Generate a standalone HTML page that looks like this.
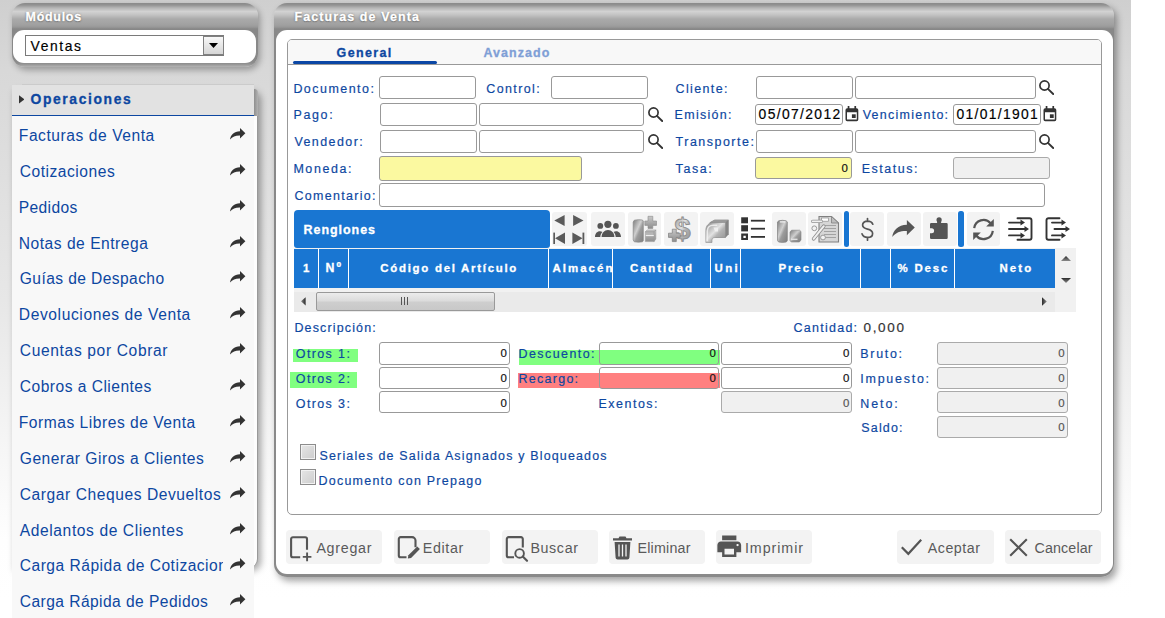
<!DOCTYPE html>
<html lang="es"><head><meta charset="utf-8"><title>Facturas de Venta</title>
<style>
html,body{margin:0;padding:0}
body{width:1165px;height:618px;overflow:hidden;background:#fff;position:relative;font-family:"Liberation Sans",sans-serif;color:#0d47a1}
.a,.in,.tb,.bb,.t,svg{position:absolute}
.t{white-space:nowrap;line-height:1}
#bg{left:0;top:0;width:1131px;height:618px;background:linear-gradient(to bottom,#cfcfcf 0,#d8d8d8 70px,#e7e7e7 300px,#f6f6f6 450px,#fefefe 540px,#fff 600px)}
.pan{border-radius:13px;background:linear-gradient(to bottom,#8a8a8a 0,#929292 2px,#b6b6b6 5px,#d2d2d2 8.5px,#c2c2c2 12px,#aaa 16px,#a0a0a0 22px,#989898 24px,#868686 26px,#888 27px,#8a8a8a 100%)}
.pan>.w{position:absolute;background:#fff;border-radius:11px}
.in{box-sizing:border-box;border:1px solid #999;border-radius:3px;background:#fff}
.y{background:#fbf9a0}
.g{background:#f0f0f0;border-color:#aaa}
.tb{top:212px;width:33.600px;height:34px;background:#f3f3f3;border-radius:3px}
.bb{top:530px;width:96px;height:34px;background:#f3f3f3;border-radius:4px}
.bar{top:211px;width:5px;height:35.5px;border-radius:2.5px;background:#1976d2}
.cb{box-sizing:border-box;width:16px;height:16px;border:1px solid #8c8c8c;box-shadow:inset 0 0 0 1px #f2f2f2;background:linear-gradient(135deg,#e6e6e6,#cdcdcd)}
</style></head><body>
<div id="bg" class="a"></div>

<!-- Modulos panel -->
<div class="a pan" style="left:12px;top:3px;width:246px;height:63.500px;box-shadow:2px 3px 6px rgba(0,0,0,.3);background:linear-gradient(to bottom,#8a8a8a 0,#929292 2px,#b6b6b6 5px,#d2d2d2 8.500px,#c2c2c2 12px,#aaa 16px,#a0a0a0 22px,#989898 24px,#868686 26px,#888 27px,#8a8a8a 59px,#929292 61px,#aeaeae 63.500px)">
  <div class="w" style="left:1px;top:27px;right:2px;bottom:3.500px"></div>
</div>
<div class="a" style="left:25px;top:35px;width:197px;height:19px;border:1px solid #7a7a7a;background:#fff"></div>
<div class="a" style="left:203px;top:36px;width:19px;height:17px;border:1px solid #808080;background:linear-gradient(#f8f8f8,#d6d6d6)"></div>
<svg style="left:209px;top:43px" width="9" height="5" viewBox="0 0 9 5"><path d="M0 0h9L4.5 5z" fill="#000"/></svg>

<!-- Operaciones panel -->
<div class="a" style="left:12px;top:88px;width:244.700px;height:480px;background:#fdfdfd;border-right:1px solid #999;border-radius:0 9px 9px 0;box-shadow:3px 3px 7px rgba(0,0,0,.34)"></div>
<div class="a" style="left:12px;top:116px;width:242px;height:502px;background:#f8f8f8"></div>
<div class="a" style="left:254px;top:89px;width:3.700px;height:27px;background:linear-gradient(to right,#8e8e8e,#b2b2b2);border-radius:0 7px 0 0"></div>
<div class="a" style="left:22px;top:84px;width:232px;height:1px;background:#cbcbcb"></div>
<div class="a" style="left:12px;top:85px;width:242px;height:30px;background:#e2e2e2;border-bottom:1px solid #0d47a1;box-sizing:content-box;height:29.5px"></div>
<svg style="left:18.700px;top:95px" width="5.500" height="8.600" viewBox="0 0 6 9"><path d="M0 0L6 4.500L0 9z" fill="#333"/></svg>
<svg width="0" height="0" style="left:0;top:0"><defs><path id="sh" d="M10 0L15.400 5.200L10 10.400V7.500C5.600 7.400 2.600 8.400 0 11.600C.6 6.700 4 3.500 10 3.200z"/></defs></svg>
<svg style="left:230.300px;top:128.40px" width="15.400" height="11.600" viewBox="0 0 15.400 11.600"><use href="#sh" fill="#333"/></svg>
<svg style="left:230.300px;top:164.40px" width="15.400" height="11.600" viewBox="0 0 15.400 11.600"><use href="#sh" fill="#333"/></svg>
<svg style="left:230.300px;top:200.40px" width="15.400" height="11.600" viewBox="0 0 15.400 11.600"><use href="#sh" fill="#333"/></svg>
<svg style="left:230.300px;top:236.40px" width="15.400" height="11.600" viewBox="0 0 15.400 11.600"><use href="#sh" fill="#333"/></svg>
<svg style="left:230.300px;top:271.40px" width="15.400" height="11.600" viewBox="0 0 15.400 11.600"><use href="#sh" fill="#333"/></svg>
<svg style="left:230.300px;top:307.40px" width="15.400" height="11.600" viewBox="0 0 15.400 11.600"><use href="#sh" fill="#333"/></svg>
<svg style="left:230.300px;top:343.40px" width="15.400" height="11.600" viewBox="0 0 15.400 11.600"><use href="#sh" fill="#333"/></svg>
<svg style="left:230.300px;top:379.40px" width="15.400" height="11.600" viewBox="0 0 15.400 11.600"><use href="#sh" fill="#333"/></svg>
<svg style="left:230.300px;top:415.40px" width="15.400" height="11.600" viewBox="0 0 15.400 11.600"><use href="#sh" fill="#333"/></svg>
<svg style="left:230.300px;top:451.40px" width="15.400" height="11.600" viewBox="0 0 15.400 11.600"><use href="#sh" fill="#333"/></svg>
<svg style="left:230.300px;top:487.40px" width="15.400" height="11.600" viewBox="0 0 15.400 11.600"><use href="#sh" fill="#333"/></svg>
<svg style="left:230.300px;top:523.40px" width="15.400" height="11.600" viewBox="0 0 15.400 11.600"><use href="#sh" fill="#333"/></svg>
<svg style="left:230.300px;top:558.40px" width="15.400" height="11.600" viewBox="0 0 15.400 11.600"><use href="#sh" fill="#333"/></svg>
<svg style="left:230.300px;top:594.40px" width="15.400" height="11.600" viewBox="0 0 15.400 11.600"><use href="#sh" fill="#333"/></svg>


<!-- Main panel -->
<div class="a pan" style="left:274px;top:3px;width:840px;height:573.500px;box-shadow:3px 4px 7px rgba(0,0,0,.36)">
  <div class="w" style="left:2px;top:27px;right:1.200px;bottom:2.500px"></div>
</div>
<div class="a" style="left:287px;top:39px;width:813px;height:474px;border:1px solid #999;border-radius:5px;background:#fff;overflow:hidden">
  <div class="a" style="left:0;top:0;width:100%;height:24px;background:#f8f8f8;border-bottom:1px solid #999"></div>
</div>
<div class="a" style="left:293px;top:61px;width:144px;height:3.2px;border-radius:2px;background:#0b47a5"></div>

<!-- form inputs -->
<div class="in" style="left:379px;top:76px;width:97px;height:23px"></div>
<div class="in" style="left:551px;top:76px;width:97px;height:23px"></div>
<div class="in" style="left:756px;top:76px;width:97px;height:23px"></div>
<div class="in" style="left:855px;top:76px;width:181px;height:23px"></div>
<div class="in" style="left:380px;top:103px;width:97px;height:23px"></div>
<div class="in" style="left:479px;top:103px;width:165px;height:23px"></div>
<div class="in" style="left:755px;top:104px;width:88px;height:21px"></div>
<div class="in" style="left:953px;top:104px;width:88px;height:21px"></div>
<div class="in" style="left:380px;top:130px;width:97px;height:23px"></div>
<div class="in" style="left:479px;top:130px;width:165px;height:23px"></div>
<div class="in" style="left:756px;top:130px;width:97px;height:23px"></div>
<div class="in" style="left:855px;top:130px;width:181px;height:23px"></div>
<div class="in y" style="left:379px;top:156px;width:203px;height:25px"></div>
<div class="in y" style="left:755px;top:157px;width:97px;height:22px"></div>
<div class="in g" style="left:953px;top:157px;width:97px;height:22px"></div>
<div class="in" style="left:379px;top:183px;width:666px;height:24px"></div>
<svg width="0" height="0" style="left:0;top:0"><defs>
 <g id="mag"><circle cx="5.500" cy="5.500" r="4.600" fill="none" stroke="#333" stroke-width="1.700"/><path d="M8.900 8.900L14.200 14" stroke="#333" stroke-width="1.900" stroke-linecap="round"/></g>
 <g id="cal"><path d="M2.200 2.200h9.400a1.700 1.700 0 0 1 1.700 1.700v9.600a1.700 1.700 0 0 1-1.700 1.700H2.200A1.700 1.700 0 0 1 .5 13.500V3.900A1.700 1.700 0 0 1 2.200 2.200zM2 6.200v7.400h9.800V6.200z" fill="#333" fill-rule="evenodd"/><rect x="2.700" y="0" width="1.700" height="3" fill="#333"/><rect x="9.400" y="0" width="1.700" height="3" fill="#333"/><rect x="6.900" y="8.300" width="3.800" height="3.700" fill="#333"/></g>
</defs></svg>
<svg style="left:648.200px;top:106.600px" width="15" height="15"><use href="#mag"/></svg>
<svg style="left:648.200px;top:133.600px" width="15" height="15"><use href="#mag"/></svg>
<svg style="left:1039.400px;top:79.700px" width="15" height="15"><use href="#mag"/></svg>
<svg style="left:1039.400px;top:133.700px" width="15" height="15"><use href="#mag"/></svg>
<svg style="left:844.700px;top:106.200px" width="14" height="16"><use href="#cal"/></svg>
<svg style="left:1043px;top:106.200px" width="14" height="16"><use href="#cal"/></svg>

<!-- grid -->
<div class="a" style="left:294px;top:210px;width:256px;height:38px;background:#1976d2;border-radius:4px 4px 3px 3px"></div>
<div class="a" style="left:294px;top:248px;width:782px;height:63.5px;background:#f1f1f1"></div>
<div class="a" style="left:294px;top:291.500px;width:761px;height:20px;background:#eaeaea"></div>
<div class="a" style="left:294px;top:248.8px;width:761.3px;height:39.2px;background:#1976d2"></div>
<div class="a" style="left:318px;top:248.800px;width:1px;height:39.200px;background:#fff"></div>
<div class="a" style="left:348px;top:248.800px;width:1px;height:39.200px;background:#fff"></div>
<div class="a" style="left:548.3px;top:248.800px;width:1px;height:39.200px;background:#fff"></div>
<div class="a" style="left:612px;top:248.800px;width:1px;height:39.200px;background:#fff"></div>
<div class="a" style="left:710px;top:248.800px;width:1px;height:39.200px;background:#fff"></div>
<div class="a" style="left:740.2px;top:248.800px;width:1px;height:39.200px;background:#fff"></div>
<div class="a" style="left:860px;top:248.800px;width:1px;height:39.200px;background:#fff"></div>
<div class="a" style="left:890.2px;top:248.800px;width:1px;height:39.200px;background:#fff"></div>
<div class="a" style="left:954px;top:248.800px;width:1px;height:39.200px;background:#fff"></div>

<svg width="0" height="0" style="left:0;top:0"><defs><linearGradient id="ga" x1="0" y1="0" x2="0" y2="1"><stop offset="0" stop-color="#2a2a2a"/><stop offset="1" stop-color="#8a8a8a"/></linearGradient><linearGradient id="gb" x1="0" y1="0" x2="1" y2="0"><stop offset="0" stop-color="#2a2a2a"/><stop offset="1" stop-color="#8a8a8a"/></linearGradient><linearGradient id="gc" x1="1" y1="0" x2="0" y2="0"><stop offset="0" stop-color="#2a2a2a"/><stop offset="1" stop-color="#8a8a8a"/></linearGradient></defs></svg>
<svg style="left:1060.500px;top:256px" width="10" height="5"><path d="M0 5L5 0L10 5z" fill="url(#ga)"/></svg>
<svg style="left:1060.500px;top:278px" width="10" height="5"><path d="M0 0h10L5 5z" fill="url(#ga)"/></svg>
<svg style="left:301px;top:297px" width="4.600" height="8.600" viewBox="0 0 5 9"><path d="M5 0v9L0 4.500z" fill="url(#gc)"/></svg>
<svg style="left:1042px;top:297px" width="4.800" height="9" viewBox="0 0 5 9"><path d="M0 0v9L5 4.500z" fill="url(#gb)"/></svg>
<div class="a" style="left:316px;top:292px;width:177px;height:17px;border:1px solid #999;border-radius:2px;background:linear-gradient(#ececec,#dcdcdc 45%,#cecece 55%,#c8c8c8)"></div>
<div class="a" style="left:401px;top:297px;width:1px;height:8px;background:#555;box-shadow:3px 0 0 #555,6px 0 0 #555"></div>

<!-- toolbar -->
<div class="tb" style="left:551.5px;width:35.5px"></div>
<div class="tb" style="left:591.2px"></div>
<div class="tb" style="left:627.5px"></div>
<div class="tb" style="left:664px"></div>
<div class="tb" style="left:700.3px"></div>
<div class="tb" style="left:772px"></div>
<div class="tb" style="left:808.3px"></div>
<div class="a bar" style="left:844px"></div>
<div class="tb" style="left:850.3px"></div>
<div class="tb" style="left:887px"></div>
<div class="tb" style="left:923px"></div>
<div class="a bar" style="left:958.200px;width:5.600px"></div>
<div class="tb" style="left:966.8px"></div>
<svg width="0" height="0" style="left:0;top:0"><defs>
 <linearGradient id="gm" x1="0" y1="0" x2="1" y2="1"><stop offset="0" stop-color="#8a8a8a"/><stop offset=".45" stop-color="#e2e2e2"/><stop offset=".6" stop-color="#b4b4b4"/><stop offset="1" stop-color="#8c8c8c"/></linearGradient>
 <linearGradient id="gd" x1="0" y1="0" x2="1" y2="1"><stop offset="0" stop-color="#7c7c7c"/><stop offset=".42" stop-color="#cfcfcf"/><stop offset=".58" stop-color="#9c9c9c"/><stop offset="1" stop-color="#7e7e7e"/></linearGradient>
 <linearGradient id="gv" x1="0" y1="0" x2="0" y2="1"><stop offset="0" stop-color="#c8c8c8"/><stop offset="1" stop-color="#8e8e8e"/></linearGradient>
</defs></svg>
<!-- nav arrows -->
<svg style="left:551.5px;top:211.5px" width="36" height="35" viewBox="0 0 36 35"><g fill="#5a5a5a">
 <path d="M12.6 2.9v11.2L2.3 8.5z"/><path d="M21.1 2.9v11.2L31.5 8.5z"/>
 <path d="M13 20.6v11.4L3 26.3z"/><rect x="1.3" y="20.6" width="1.7" height="11.4"/>
 <path d="M20.4 20.6v11.4l10.1-5.7z"/><rect x="30.5" y="20.6" width="1.8" height="11.4"/></g></svg>
<!-- people -->
<svg style="left:594px;top:219px" width="28" height="19" viewBox="0 0 28 19"><g fill="#555"><circle cx="13.900" cy="5.300" r="3.600"/><circle cx="6.300" cy="6.900" r="2.900"/><circle cx="21.900" cy="6.900" r="2.900"/><path d="M7.600 18c0-4.200 2.800-7.100 6.400-7.100s6.400 2.900 6.400 7.100z"/><path d="M1 18c0-3.400 2-5.800 4.900-5.800 1 0 1.900.3 2.600.8C7.100 14.200 6.400 16 6.300 18zM27 18c0-3.400-2-5.800-4.900-5.800-1 0-1.900.3-2.600.8 1.400 1.200 2.100 3 2.200 5z"/></g></svg>
<!-- slab + plus -->
<svg style="left:632px;top:215px" width="26" height="28" viewBox="0 0 26 28"><path d="M2.300 5.200Q6.500 4.200 10.500 5l.8 1.200V25.500l-.8 1.300Q6.500 27.500 2.300 26.800L1.200 25V7z" fill="url(#gd)" stroke="#858585" stroke-width=".7"/><path d="M16 1.300h4.800v4.700H24.500v4.400h-3.700v3h-4.800v-3H12.800V6H16z" fill="url(#gv)" stroke="#8a8a8a" stroke-width=".6"/><path d="M13.300 16.800l1.800-1.900h8.800l-1.800 1.900zM13.300 16.800h8.800v9.800h-8.800zM22.100 16.800l1.800-1.900V24l-1.800 2.600z" fill="url(#gv)" stroke="#9a9a9a" stroke-width=".5"/><path d="M13.800 20.500h8" stroke="#eee" stroke-width="1.200"/></svg>
<!-- $ plus -->
<svg style="left:667px;top:213px" width="28" height="32" viewBox="0 0 28 32"><text x="7.300" y="26.300" font-family="Liberation Sans" font-weight="700" font-size="29.500" fill="url(#gm)" stroke="#8a8a8a" stroke-width=".8">$</text><path d="M5.300 16.200h4v4h4v4.200h-4v4.200h-4v-4.200H1.500v-4.200h3.800z" fill="url(#gv)" stroke="#7c7c7c" stroke-width=".7"/></svg>
<!-- 3d arrow -->
<svg style="left:704px;top:218px" width="27" height="26" viewBox="0 0 27 26"><path d="M5.500 4.500L10.500 1.700h14v14.500l-3 3.300H11.500z" fill="#8e8e8e"/><path d="M5.500 4.500L10.500 1.700h14L21.500 4.500z" fill="#9a9a9a"/><path d="M21.500 4.500l3-2.800v14.500l-3 3.300z" fill="#858585"/><path d="M1.800 24.500V12.500c0-5 3-8 8-8h11.700v15H11c-2 0-3 1-3 3v2z" fill="url(#gm)" stroke="#8c8c8c" stroke-width=".6"/><path d="M3.300 23V13c0-3.500 2.500-5.800 6-5.800h4" fill="none" stroke="#f2f2f2" stroke-width="1.600" opacity=".85"/><path d="M9.500 9.500h4.500v4h-3z" fill="#f4f4f4" opacity=".8"/></svg>
<!-- list -->
<svg style="left:741px;top:217.400px" width="25" height="24" viewBox="0 0 25 24"><g fill="#333"><rect x=".2" y=".3" width="6.800" height="6"/><rect x=".2" y="8.200" width="6.800" height="6.200"/><path d="M.2 16.500H7v6.600H.2zM2.400 18.700v2.200h2.400v-2.200z" fill-rule="evenodd"/><rect x="9.900" y="2.800" width="14.100" height="1.800"/><rect x="9.900" y="10.800" width="14.100" height="1.800"/><rect x="9.900" y="19" width="14.100" height="1.800"/></g></svg>
<!-- boxes -->
<svg style="left:776px;top:218.500px" width="26" height="25" viewBox="0 0 26 25"><path d="M2.600 1.800Q6.500 .8 10.300 1.800L11.300 3.200V21.500L10.300 23Q6.500 23.800 2.600 23L1.500 21.500V3.200z" fill="url(#gd)" stroke="#808080" stroke-width=".7"/><path d="M3.800 2.900h5.500" stroke="#ededed" stroke-width="1.300"/><path d="M14 13l1.600-1.800h8L25 12.500V21l-1.600 2h-8.200L14 21.500z" fill="url(#gd)" stroke="#858585" stroke-width=".6"/><path d="M15 20.300h6.500" stroke="#e4e4e4" stroke-width="1.300"/></svg>
<!-- doc percent -->
<svg style="left:811px;top:215px" width="29" height="28" viewBox="0 0 29 28"><path d="M8 1.500h12.500l7 6.500V27H8z" fill="#d6d6d6" stroke="#808080" stroke-width="1.100"/><path d="M20.500 1.500V8h7z" fill="#bdbdbd" stroke="#808080" stroke-width=".8"/><g stroke="#a2a2a2" stroke-width="1.100"><path d="M11 10.500h14M13 13.500h12M13 16.500h12M13 19.500h12M13 22.500h12"/></g><rect x="10.500" y="3" width="7" height="3.200" fill="#fff" stroke="#8e8e8e" stroke-width=".7"/><path d="M1.600 6.300h8.800" stroke="#929292" stroke-width="3.200" stroke-linecap="round"/><path d="M1.600 6.300h8.800" stroke="#f0f0f0" stroke-width="1.800" stroke-linecap="round"/><path d="M12.800 11.200L2.600 23.800" stroke="#8e8e8e" stroke-width="3.600" stroke-linecap="round"/><path d="M12.800 11.200L2.600 23.800" stroke="#efefef" stroke-width="2" stroke-linecap="round"/><circle cx="3.300" cy="13.300" r="2.400" fill="#f2f2f2" stroke="#999" stroke-width="1"/><circle cx="12" cy="22.500" r="2.400" fill="#f2f2f2" stroke="#999" stroke-width="1"/></svg>
<!-- $ outline -->
<svg style="left:860px;top:216.500px" width="15" height="25" viewBox="0 0 15 25"><path d="M12.800 7.200C12 5.200 10.200 4.200 7.500 4.200 4.600 4.200 2.600 5.700 2.600 8c0 2.300 1.700 3.300 4.900 4.100 3.400.8 5.100 1.900 5.100 4.300 0 2.400-2 4-5 4-3 0-4.900-1.300-5.600-3.600M7.500 1.500v3M7.500 20.400v2.800" fill="none" stroke="#555" stroke-width="1.700" stroke-linecap="round"/></svg>
<!-- share -->
<svg style="left:892.300px;top:220.300px" width="23" height="17" viewBox="0 0 15.400 11.600"><use href="#sh" fill="#555"/></svg>
<!-- puzzle -->
<svg style="left:930.200px;top:216.800px" width="18" height="22" viewBox="0 0 18 22"><circle cx="9.100" cy="2.800" r="2.600" fill="#555"/><path d="M1.200 6.100h5.900V3.500h4v2.600h5.400a1.200 1.200 0 0 1 1.200 1.200V20.700a1.200 1.200 0 0 1-1.200 1.200H1.200A1.200 1.200 0 0 1 0 20.700V16.300h1.600a2.500 2.500 0 0 0 0-5H0V7.300a1.200 1.200 0 0 1 1.200-1.200z" fill="#555"/></svg>
<!-- refresh -->
<svg style="left:972px;top:217.500px" width="23" height="23" viewBox="0 0 23 23"><g fill="none" stroke="#555" stroke-width="2.200"><path d="M2.200 10.200A9.300 9.300 0 0 1 18.600 5.300"/><path d="M20.800 12.800A9.300 9.300 0 0 1 4.400 17.700"/></g><path d="M21.800 1v7.600h-7.600z" fill="#555"/><path d="M1.200 22v-7.600h7.600z" fill="#555"/></svg>
<!-- import -->
<svg style="left:1007.500px;top:216.800px" width="25" height="24" viewBox="0 0 25 24"><g fill="none" stroke="#333" stroke-width="1.900" stroke-linecap="round" stroke-linejoin="round"><path d="M9.500 1.200h12a2 2 0 0 1 2 2v17.600a2 2 0 0 1-2 2h-12"/><path d="M1 5.600h13M1 12h17M1 18.400h13"/></g><path d="M12.500 2.600l4.500 3-4.500 3zM16.500 9l4.500 3-4.500 3zM12.500 15.400l4.500 3-4.500 3z" fill="#333"/></svg>
<!-- export -->
<svg style="left:1044.500px;top:216.800px" width="26" height="24" viewBox="0 0 26 24"><g fill="none" stroke="#333" stroke-width="1.900" stroke-linecap="round" stroke-linejoin="round"><path d="M14.500 1.200H3.500a2 2 0 0 0-2 2v17.600a2 2 0 0 0 2 2h11"/><path d="M7 5.600h11M9.500 12h12M7 18.400h11"/></g><path d="M16.500 2.600l4.500 3-4.500 3zM20.500 9l4.500 3-4.500 3zM16.500 15.400l4.500 3-4.500 3z" fill="#333"/></svg>


<!-- lower form -->
<div class="a" style="left:293px;top:349px;width:65px;height:13px;background:#80ff80"></div>
<div class="a" style="left:290px;top:372.3px;width:67px;height:15.5px;background:#80ff80"></div>
<div class="a" style="left:518.6px;top:350px;width:201px;height:15px;background:#80ff80"></div>
<div class="a" style="left:518px;top:372.8px;width:201.6px;height:15px;background:#ff8080"></div>
<div class="in" style="left:379px;top:342px;width:131px;height:22.5px"></div>
<div class="in" style="left:379px;top:367.3px;width:131px;height:21.5px"></div>
<div class="in" style="left:379px;top:391.3px;width:131px;height:22px"></div>
<div class="in" style="left:599px;top:342px;width:119.5px;height:22.5px;background:transparent"></div>
<div class="in" style="left:599px;top:367.3px;width:119.5px;height:21.5px;background:transparent"></div>
<div class="in" style="left:721px;top:342px;width:131px;height:22.5px"></div>
<div class="in" style="left:721px;top:367.3px;width:131px;height:21.5px"></div>
<div class="in g" style="left:721px;top:391.3px;width:131px;height:22px"></div>
<div class="in g" style="left:937px;top:342px;width:131px;height:22.5px"></div>
<div class="in g" style="left:937px;top:367.3px;width:131px;height:21.5px"></div>
<div class="in g" style="left:937px;top:391.3px;width:131px;height:22px"></div>
<div class="in g" style="left:937px;top:416.3px;width:131px;height:21.5px"></div>
<div class="a cb" style="left:300px;top:444px"></div>
<div class="a cb" style="left:300px;top:469px"></div>

<!-- bottom buttons -->
<div class="bb" style="left:286px"></div>
<div class="bb" style="left:393.700px"></div>
<div class="bb" style="left:501.500px"></div>
<div class="bb" style="left:609.200px"></div>
<div class="bb" style="left:716.300px"></div>
<div class="bb" style="left:897.200px;width:96.500px"></div>
<div class="bb" style="left:1005px"></div>
<!-- Agregar -->
<svg style="left:288.500px;top:534.500px" width="24" height="27" viewBox="0 0 24 27"><path d="M11.200 22.300H3.900a1.800 1.800 0 0 1-1.800-1.800V4a1.800 1.800 0 0 1 1.800-1.800h12.300a1.800 1.800 0 0 1 1.800 1.800v10.700" fill="none" stroke="#555" stroke-width="2.100"/><path d="M18.100 17.600v8.600M13.800 21.900h8.600" stroke="#555" stroke-width="1.900"/></svg>
<!-- Editar -->
<svg style="left:396.500px;top:534.500px" width="25" height="26" viewBox="0 0 25 26"><path d="M9.500 22.300H3.600a1.800 1.800 0 0 1-1.800-1.800V3.900a1.800 1.800 0 0 1 1.800-1.800h11.400a3.500 3.500 0 0 1 3.500 3.500v6.600" fill="none" stroke="#555" stroke-width="2.100"/><path d="M10.800 23.600l.6-3.400 8.800-8.800 2.700 2.700-8.800 8.800z" fill="#555"/></svg>
<!-- Buscar -->
<svg style="left:504.500px;top:534.500px" width="25" height="27" viewBox="0 0 25 27"><path d="M9 22.300H3.600a1.800 1.800 0 0 1-1.800-1.800V3.900a1.800 1.800 0 0 1 1.800-1.800h12.400a1.800 1.800 0 0 1 1.800 1.800v8.600" fill="none" stroke="#555" stroke-width="2.100"/><circle cx="14.600" cy="18.400" r="4.300" fill="none" stroke="#555" stroke-width="1.900"/><path d="M17.800 21.600l4.200 4.200" stroke="#555" stroke-width="2.100" stroke-linecap="round"/></svg>
<!-- Eliminar -->
<svg style="left:612px;top:535.500px" width="21" height="24" viewBox="0 0 21 24"><path d="M7.500 .6h6l1 1.600H20v2.400H1V2.200h5.500zM2.600 6h15.800l-1 15.800a2 2 0 0 1-2 1.800H5.600a2 2 0 0 1-2-1.800z" fill="#555"/><path d="M7 8.500v12M10.500 8.500v12M14 8.500v12" stroke="#f3f3f3" stroke-width="1.300"/></svg>
<!-- Imprimir -->
<svg style="left:715.400px;top:531.800px" width="28.500" height="28.500" viewBox="0 0 24 24"><path fill="#555" d="M19 8H5c-1.660 0-3 1.340-3 3v6h4v4h12v-4h4v-6c0-1.660-1.340-3-3-3zm-3 11H8v-5h8v5zm3-7c-.55 0-1-.45-1-1s.45-1 1-1 1 .45 1 1-.45 1-1 1zm-1-9H6v4h12V3z"/></svg>
<!-- Aceptar -->
<svg style="left:900px;top:537.500px" width="23" height="18" viewBox="0 0 23 18"><path d="M1.800 9.300l6.500 6.500L21.200 1.800" fill="none" stroke="#555" stroke-width="2.200"/></svg>
<!-- Cancelar -->
<svg style="left:1009px;top:537.500px" width="19" height="19" viewBox="0 0 19 19"><path d="M1.200 1.200l16.600 16.600M17.800 1.200L1.200 17.800" fill="none" stroke="#555" stroke-width="2.100"/></svg>


<span class="t" style="left:25.60px;top:11.25px;font-size:12.48px;letter-spacing:0.714px;color:#ffffff;font-weight:700;-webkit-text-stroke:.3px;text-shadow:0 0 2px #666,0 1px 1px #777;">Módulos</span>
<span class="t" style="left:294.50px;top:11.25px;font-size:12.48px;letter-spacing:1.101px;color:#ffffff;font-weight:700;-webkit-text-stroke:.3px;text-shadow:0 0 2px #666,0 1px 1px #777;">Facturas de Venta</span>
<span class="t" style="left:30.60px;top:40.26px;font-size:13.86px;letter-spacing:1.589px;color:#000;-webkit-text-stroke:.18px;">Ventas</span>
<span class="t" style="left:30.50px;top:93.26px;font-size:13.86px;letter-spacing:1.625px;font-weight:700;-webkit-text-stroke:.3px;">Operaciones</span>
<span class="t" style="left:18.80px;top:128.26px;font-size:15.60px;letter-spacing:0.556px;">Facturas de Venta</span>
<span class="t" style="left:19.80px;top:164.26px;font-size:15.60px;letter-spacing:0.510px;">Cotizaciones</span>
<span class="t" style="left:18.80px;top:200.26px;font-size:15.60px;letter-spacing:0.351px;">Pedidos</span>
<span class="t" style="left:18.80px;top:236.26px;font-size:15.60px;letter-spacing:0.511px;">Notas de Entrega</span>
<span class="t" style="left:19.80px;top:271.26px;font-size:15.60px;letter-spacing:0.406px;">Guías de Despacho</span>
<span class="t" style="left:18.80px;top:307.26px;font-size:15.60px;letter-spacing:0.599px;">Devoluciones de Venta</span>
<span class="t" style="left:19.80px;top:343.26px;font-size:15.60px;letter-spacing:0.634px;">Cuentas por Cobrar</span>
<span class="t" style="left:19.80px;top:379.26px;font-size:15.60px;letter-spacing:0.473px;">Cobros a Clientes</span>
<span class="t" style="left:18.80px;top:415.26px;font-size:15.60px;letter-spacing:0.519px;">Formas Libres de Venta</span>
<span class="t" style="left:19.80px;top:451.26px;font-size:15.60px;letter-spacing:0.502px;">Generar Giros a Clientes</span>
<span class="t" style="left:19.80px;top:487.26px;font-size:15.60px;letter-spacing:0.559px;">Cargar Cheques Devueltos</span>
<span class="t" style="left:19.80px;top:523.26px;font-size:15.60px;letter-spacing:0.589px;">Adelantos de Clientes</span>
<span class="t" style="left:19.80px;top:558.26px;font-size:15.60px;letter-spacing:0.481px;width:203.5px;overflow:hidden;">Carga Rápida de Cotizaciones</span>
<span class="t" style="left:19.80px;top:594.26px;font-size:15.60px;letter-spacing:0.432px;">Carga Rápida de Pedidos</span>
<span class="t" style="left:336.60px;top:47.26px;font-size:12.48px;letter-spacing:1.372px;font-weight:700;-webkit-text-stroke:.3px;">General</span>
<span class="t" style="left:483.40px;top:47.26px;font-size:12.48px;letter-spacing:1.084px;color:#7f9fd6;font-weight:700;-webkit-text-stroke:.3px;">Avanzado</span>
<span class="t" style="left:293.40px;top:83.25px;font-size:12.48px;letter-spacing:1.471px;-webkit-text-stroke:.18px;">Documento:</span>
<span class="t" style="left:293.40px;top:109.25px;font-size:12.48px;letter-spacing:1.670px;-webkit-text-stroke:.18px;">Pago:</span>
<span class="t" style="left:294.40px;top:136.25px;font-size:12.48px;letter-spacing:1.439px;-webkit-text-stroke:.18px;">Vendedor:</span>
<span class="t" style="left:293.40px;top:163.25px;font-size:12.48px;letter-spacing:1.590px;-webkit-text-stroke:.18px;">Moneda:</span>
<span class="t" style="left:294.40px;top:190.25px;font-size:12.48px;letter-spacing:1.315px;-webkit-text-stroke:.18px;">Comentario:</span>
<span class="t" style="left:486.30px;top:83.26px;font-size:12.48px;letter-spacing:1.386px;-webkit-text-stroke:.18px;">Control:</span>
<span class="t" style="left:675.60px;top:83.25px;font-size:12.48px;letter-spacing:1.370px;-webkit-text-stroke:.18px;">Cliente:</span>
<span class="t" style="left:674.60px;top:109.25px;font-size:12.48px;letter-spacing:1.293px;-webkit-text-stroke:.18px;">Emisión:</span>
<span class="t" style="left:675.60px;top:136.25px;font-size:12.48px;letter-spacing:1.497px;-webkit-text-stroke:.18px;">Transporte:</span>
<span class="t" style="left:675.60px;top:163.26px;font-size:12.48px;letter-spacing:1.591px;-webkit-text-stroke:.18px;">Tasa:</span>
<span class="t" style="left:862.70px;top:109.25px;font-size:12.48px;letter-spacing:1.270px;-webkit-text-stroke:.18px;">Vencimiento:</span>
<span class="t" style="left:861.70px;top:163.26px;font-size:12.48px;letter-spacing:1.531px;-webkit-text-stroke:.18px;">Estatus:</span>
<span class="t" style="left:294.40px;top:322.25px;font-size:12.48px;letter-spacing:1.160px;-webkit-text-stroke:.18px;">Descripción:</span>
<span class="t" style="left:295.80px;top:348.26px;font-size:12.48px;letter-spacing:1.388px;-webkit-text-stroke:.18px;">Otros 1:</span>
<span class="t" style="left:295.80px;top:373.25px;font-size:12.48px;letter-spacing:1.388px;-webkit-text-stroke:.18px;">Otros 2:</span>
<span class="t" style="left:295.80px;top:398.25px;font-size:12.48px;letter-spacing:1.388px;-webkit-text-stroke:.18px;">Otros 3:</span>
<span class="t" style="left:518.50px;top:348.26px;font-size:12.48px;letter-spacing:1.443px;-webkit-text-stroke:.18px;">Descuento:</span>
<span class="t" style="left:518.50px;top:373.25px;font-size:12.48px;letter-spacing:1.282px;-webkit-text-stroke:.18px;">Recargo:</span>
<span class="t" style="left:598.40px;top:398.25px;font-size:12.48px;letter-spacing:1.521px;-webkit-text-stroke:.18px;">Exentos:</span>
<span class="t" style="left:793.60px;top:322.25px;font-size:12.48px;letter-spacing:1.261px;-webkit-text-stroke:.18px;">Cantidad:</span>
<span class="t" style="left:863.60px;top:321.26px;font-size:13.52px;letter-spacing:1.624px;color:#333;-webkit-text-stroke:.18px;">0,000</span>
<span class="t" style="left:860.30px;top:348.25px;font-size:12.48px;letter-spacing:1.680px;-webkit-text-stroke:.18px;">Bruto:</span>
<span class="t" style="left:860.30px;top:373.25px;font-size:12.48px;letter-spacing:1.752px;-webkit-text-stroke:.18px;">Impuesto:</span>
<span class="t" style="left:860.30px;top:398.25px;font-size:12.48px;letter-spacing:1.916px;-webkit-text-stroke:.18px;">Neto:</span>
<span class="t" style="left:861.30px;top:422.25px;font-size:12.48px;letter-spacing:1.182px;-webkit-text-stroke:.18px;">Saldo:</span>
<span class="t" style="left:319.50px;top:450.26px;font-size:12.48px;letter-spacing:1.163px;-webkit-text-stroke:.18px;">Seriales de Salida Asignados y Bloqueados</span>
<span class="t" style="left:318.50px;top:475.26px;font-size:12.48px;letter-spacing:1.250px;-webkit-text-stroke:.18px;">Documento con Prepago</span>
<span class="t" style="left:758.60px;top:108.26px;font-size:13.86px;letter-spacing:1.360px;color:#000;-webkit-text-stroke:.18px;">05/07/2012</span>
<span class="t" style="left:956.50px;top:108.26px;font-size:13.86px;letter-spacing:1.316px;color:#000;-webkit-text-stroke:.18px;">01/01/1901</span>
<span class="t" style="left:841.50px;top:163.25px;font-size:11.44px;letter-spacing:0.000px;color:#111;-webkit-text-stroke:.18px;">0</span>
<span class="t" style="left:500.60px;top:348.25px;font-size:11.44px;letter-spacing:0.000px;color:#111;-webkit-text-stroke:.18px;">0</span>
<span class="t" style="left:500.60px;top:373.25px;font-size:11.44px;letter-spacing:0.000px;color:#111;-webkit-text-stroke:.18px;">0</span>
<span class="t" style="left:500.60px;top:398.25px;font-size:11.44px;letter-spacing:0.000px;color:#111;-webkit-text-stroke:.18px;">0</span>
<span class="t" style="left:709.40px;top:348.25px;font-size:11.44px;letter-spacing:0.000px;color:#111;-webkit-text-stroke:.18px;">0</span>
<span class="t" style="left:709.40px;top:373.25px;font-size:11.44px;letter-spacing:0.000px;color:#111;-webkit-text-stroke:.18px;">0</span>
<span class="t" style="left:843.00px;top:348.25px;font-size:11.44px;letter-spacing:0.000px;color:#111;-webkit-text-stroke:.18px;">0</span>
<span class="t" style="left:843.00px;top:373.25px;font-size:11.44px;letter-spacing:0.000px;color:#111;-webkit-text-stroke:.18px;">0</span>
<span class="t" style="left:843.00px;top:398.25px;font-size:11.44px;letter-spacing:0.000px;color:#555;-webkit-text-stroke:.18px;">0</span>
<span class="t" style="left:1058.30px;top:348.25px;font-size:11.44px;letter-spacing:0.000px;color:#555;-webkit-text-stroke:.18px;">0</span>
<span class="t" style="left:1058.30px;top:373.25px;font-size:11.44px;letter-spacing:0.000px;color:#555;-webkit-text-stroke:.18px;">0</span>
<span class="t" style="left:1058.30px;top:398.25px;font-size:11.44px;letter-spacing:0.000px;color:#555;-webkit-text-stroke:.18px;">0</span>
<span class="t" style="left:1058.30px;top:422.25px;font-size:11.44px;letter-spacing:0.000px;color:#555;-webkit-text-stroke:.18px;">0</span>
<span class="t" style="left:303.60px;top:224.26px;font-size:12.48px;letter-spacing:0.962px;color:#ffffff;font-weight:700;-webkit-text-stroke:.3px;">Renglones</span>
<span class="t" style="left:302.90px;top:263.25px;font-size:11.44px;letter-spacing:0.000px;color:#ffffff;font-weight:700;-webkit-text-stroke:.3px;">1</span>
<span class="t" style="left:325.60px;top:262.26px;font-size:12.32px;letter-spacing:2.108px;color:#ffffff;font-weight:700;-webkit-text-stroke:.3px;">Nº</span>
<span class="t" style="left:380.30px;top:263.25px;font-size:11.44px;letter-spacing:1.723px;color:#ffffff;font-weight:700;-webkit-text-stroke:.3px;">Código del Artículo</span>
<span class="t" style="left:552.40px;top:263.25px;font-size:11.44px;letter-spacing:2.052px;color:#ffffff;font-weight:700;-webkit-text-stroke:.3px;width:59.8px;overflow:hidden;">Almacén</span>
<span class="t" style="left:630.00px;top:263.25px;font-size:11.44px;letter-spacing:1.866px;color:#ffffff;font-weight:700;-webkit-text-stroke:.3px;">Cantidad</span>
<span class="t" style="left:714.50px;top:263.25px;font-size:11.44px;letter-spacing:2.377px;color:#ffffff;font-weight:700;-webkit-text-stroke:.3px;">Uni</span>
<span class="t" style="left:778.40px;top:263.25px;font-size:11.44px;letter-spacing:1.944px;color:#ffffff;font-weight:700;-webkit-text-stroke:.3px;">Precio</span>
<span class="t" style="left:897.50px;top:263.25px;font-size:11.44px;letter-spacing:1.834px;color:#ffffff;font-weight:700;-webkit-text-stroke:.3px;">% Desc</span>
<span class="t" style="left:999.50px;top:263.25px;font-size:11.44px;letter-spacing:2.090px;color:#ffffff;font-weight:700;-webkit-text-stroke:.3px;">Neto</span>
<span class="t" style="left:316.40px;top:541.26px;font-size:14.28px;letter-spacing:0.716px;color:#5a5a5a;">Agregar</span>
<span class="t" style="left:422.70px;top:541.26px;font-size:14.28px;letter-spacing:0.677px;color:#5a5a5a;">Editar</span>
<span class="t" style="left:530.40px;top:541.26px;font-size:14.28px;letter-spacing:0.630px;color:#5a5a5a;">Buscar</span>
<span class="t" style="left:637.40px;top:541.26px;font-size:14.28px;letter-spacing:0.232px;color:#5a5a5a;">Eliminar</span>
<span class="t" style="left:744.90px;top:541.26px;font-size:14.28px;letter-spacing:0.950px;color:#5a5a5a;">Imprimir</span>
<span class="t" style="left:927.70px;top:541.26px;font-size:14.28px;letter-spacing:0.531px;color:#5a5a5a;">Aceptar</span>
<span class="t" style="left:1034.60px;top:541.26px;font-size:14.28px;letter-spacing:0.109px;color:#5a5a5a;">Cancelar</span>
</body></html>
